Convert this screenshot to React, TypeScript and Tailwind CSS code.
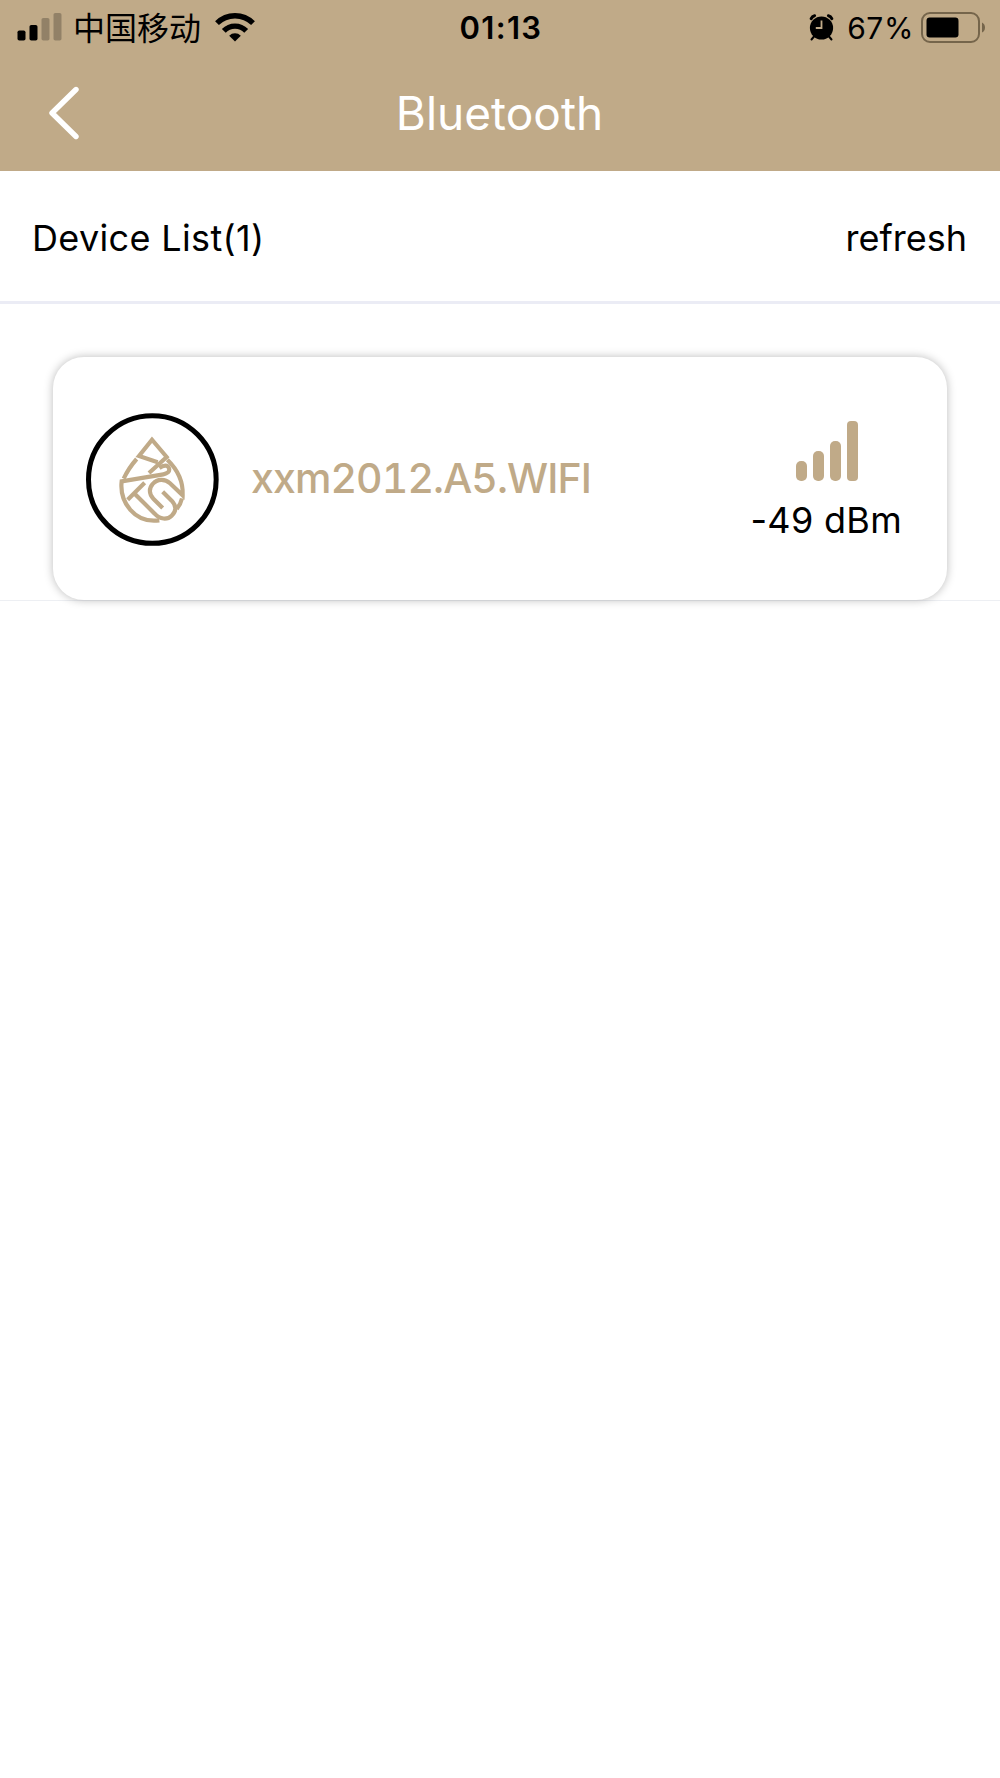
type Device = {
  name: string;
  rssi: number;
};

const devices: Device[] = [{ name: "xxm2012.A5.WIFI", rssi: -49 }];

function StatusBar() {
  return (
    <div className="flex h-[54px] items-center justify-between pl-[17px] pr-[15px] text-black">
      <div className="flex w-[400px] items-center">
        <svg className="h-[28px] w-[45px]" viewBox="0 0 45 28">
          <rect x="0.5" y="17.5" width="8" height="10" rx="1.8" />
          <rect x="12.5" y="12" width="8" height="15.5" rx="1.8" />
          <g fillOpacity="0.24">
            <rect x="24.5" y="5" width="8" height="22.5" rx="1.8" />
            <rect x="36.5" y="0" width="8" height="27.5" rx="1.8" />
          </g>
        </svg>
        <span className="ml-[11px] pb-[2px] font-['Noto_Sans_CJK_SC',sans-serif] text-[32px] leading-[52px]">中国移动</span>
        <svg className="ml-[14px] h-[30px] w-[40px]" viewBox="0 0 40 30" fill="none" stroke="#000" strokeWidth="5.4">
          <path d="M2 11.2 A25.5 25.5 0 0 1 38 11.2" />
          <path d="M8.8 18.9 A15.6 15.6 0 0 1 31.2 18.9" />
          <path d="M20 29.5 L14.2 23.7 A8.2 8.2 0 0 1 25.8 23.7 Z" fill="#000" stroke="none" />
        </svg>
      </div>
      <span className="pt-px text-[31px] leading-[54px] font-semibold tracking-[1.3px]">01:13</span>
      <div className="flex w-[400px] items-center justify-end">
        <svg className="h-[27px] w-[25px]" viewBox="0 0 25 27" fill="none" stroke="#000">
          <path d="M5 22.5 L2.5 25.5 M20 22.5 L22.5 25.5" strokeWidth="2" strokeLinecap="round" />
          <path d="M2.2 4.6 Q3.2 2.2 5.6 1.7 M19.4 1.7 Q21.8 2.2 22.8 4.6" strokeWidth="3" strokeLinecap="round" />
          <circle cx="12.5" cy="14" r="11.6" fill="#000" stroke="none" />
          <path d="M12.5 6.5 V14 H6.8" stroke="#c0aa88" strokeWidth="1.8" />
        </svg>
        <span className="ml-[13px] pt-px text-[30px] leading-[54px] tracking-[0.6px]">67%</span>
        <svg className="ml-[7px] h-[31px] w-[64px]" viewBox="0 0 64 31">
          <rect x="1" y="1" width="57" height="29" rx="8" fill="none" stroke="#75654b" strokeWidth="2" />
          <rect x="5.5" y="5.5" width="32" height="20" rx="3.2" />
          <path d="M61 10.5 Q64 12 64 15.5 Q64 19 61 20.5 Z" fill="#75654b" />
        </svg>
      </div>
    </div>
  );
}

function NavBar() {
  return (
    <div className="flex h-[117px] items-center justify-between pt-[2px] pr-[49px] pb-px pl-[48px]">
      <svg className="h-[54px] w-[32px]" viewBox="0 0 32 54" fill="none">
        <path d="M28 3.5 L4 27 L28 50.5" stroke="#fff" strokeWidth="5.4" strokeLinecap="round" strokeLinejoin="round" />
      </svg>
      <h1 className="text-[46px] leading-none font-normal text-white">Bluetooth</h1>
      <span className="w-[32px]" />
    </div>
  );
}

// water drop built from the brand's initials
function DropLogo() {
  return (
    <svg className="size-[133px] shrink-0" viewBox="48 39 399 399" fill="none">
      <circle cx="247" cy="238.5" r="191.5" stroke="#000" strokeWidth="15" />
      <g transform="translate(132 96)" stroke="#c0aa88" strokeWidth="12.5">
        <path d="M131 91 L75 72 L114 23 L158 75 L105 123" />
        <path d="M68 81 Q44 108 29 140" />
        <path d="M136 108 C150 98 162 99 165 109 C168 119 160 125 148 127 L23 148 C16 210 62 275 136 265" />
        <path d="M41 203 L92 152" />
        <path d="M62 185 L122 245 C138 263 160 264 173 251 C188 237 187 221 173 206 L146 179" />
        <path d="M146 228 L118 200 C104 186 105 168 116 156 C130 140 153 140 168 154 L206 190 C208 150 189 111 160 83" />
        <path d="M204 199 Q200 217 188 231" />
      </g>
    </svg>
  );
}

function SignalBars() {
  return (
    <div className="flex h-[60px] items-end gap-[6px] pl-[2px]">
      <span className="h-[20px] w-[11px] rounded-[5px] bg-[#c0aa88]" />
      <span className="h-[30px] w-[11px] rounded-[5px] bg-[#c0aa88]" />
      <span className="h-[40px] w-[11px] rounded-[5px] bg-[#c0aa88]" />
      <span className="h-[60px] w-[11px] rounded-[4px] bg-[#c0aa88]" />
    </div>
  );
}

function DeviceCard({ device }: { device: Device }) {
  return (
    <li className="border-b border-[#edeff3] px-[53px] pt-[53px]">
      <div className="flex h-[243px] items-center rounded-[31px] bg-white pt-[2px] pr-[45px] pl-[33px] shadow-[0_0_10px_rgba(0,0,0,0.27)]">
        <DropLogo />
        <span className="ml-[32px] pb-[2px] text-[41px] leading-none font-medium tracking-[-0.9px] text-[#c0aa88] tabular-nums">
          {device.name}
        </span>
        <div className="ml-auto flex flex-col items-center pt-[1px]">
          <SignalBars />
          <span className="mt-[20px] text-[36px] leading-[38px] tracking-[0.3px] text-black">{device.rssi} dBm</span>
        </div>
      </div>
    </li>
  );
}

export default function App() {
  return (
    <div className="min-h-[1778px] w-[1000px] bg-white font-[Inter,'Noto_Sans_CJK_SC',sans-serif]">
      <header className="h-[171px] bg-[#c0aa88]">
        <StatusBar />
        <NavBar />
      </header>
      <div className="flex h-[133px] items-center justify-between border-b-[3px] border-[#ebecf5] px-[33px] pt-[3px] text-[36px] text-black">
        <span className="-ml-px tracking-[0.35px]">Device List({devices.length})</span>
        <button className="font-normal">refresh</button>
      </div>
      <ul>
        {devices.map((device) => (
          <DeviceCard key={device.name} device={device} />
        ))}
      </ul>
    </div>
  );
}
